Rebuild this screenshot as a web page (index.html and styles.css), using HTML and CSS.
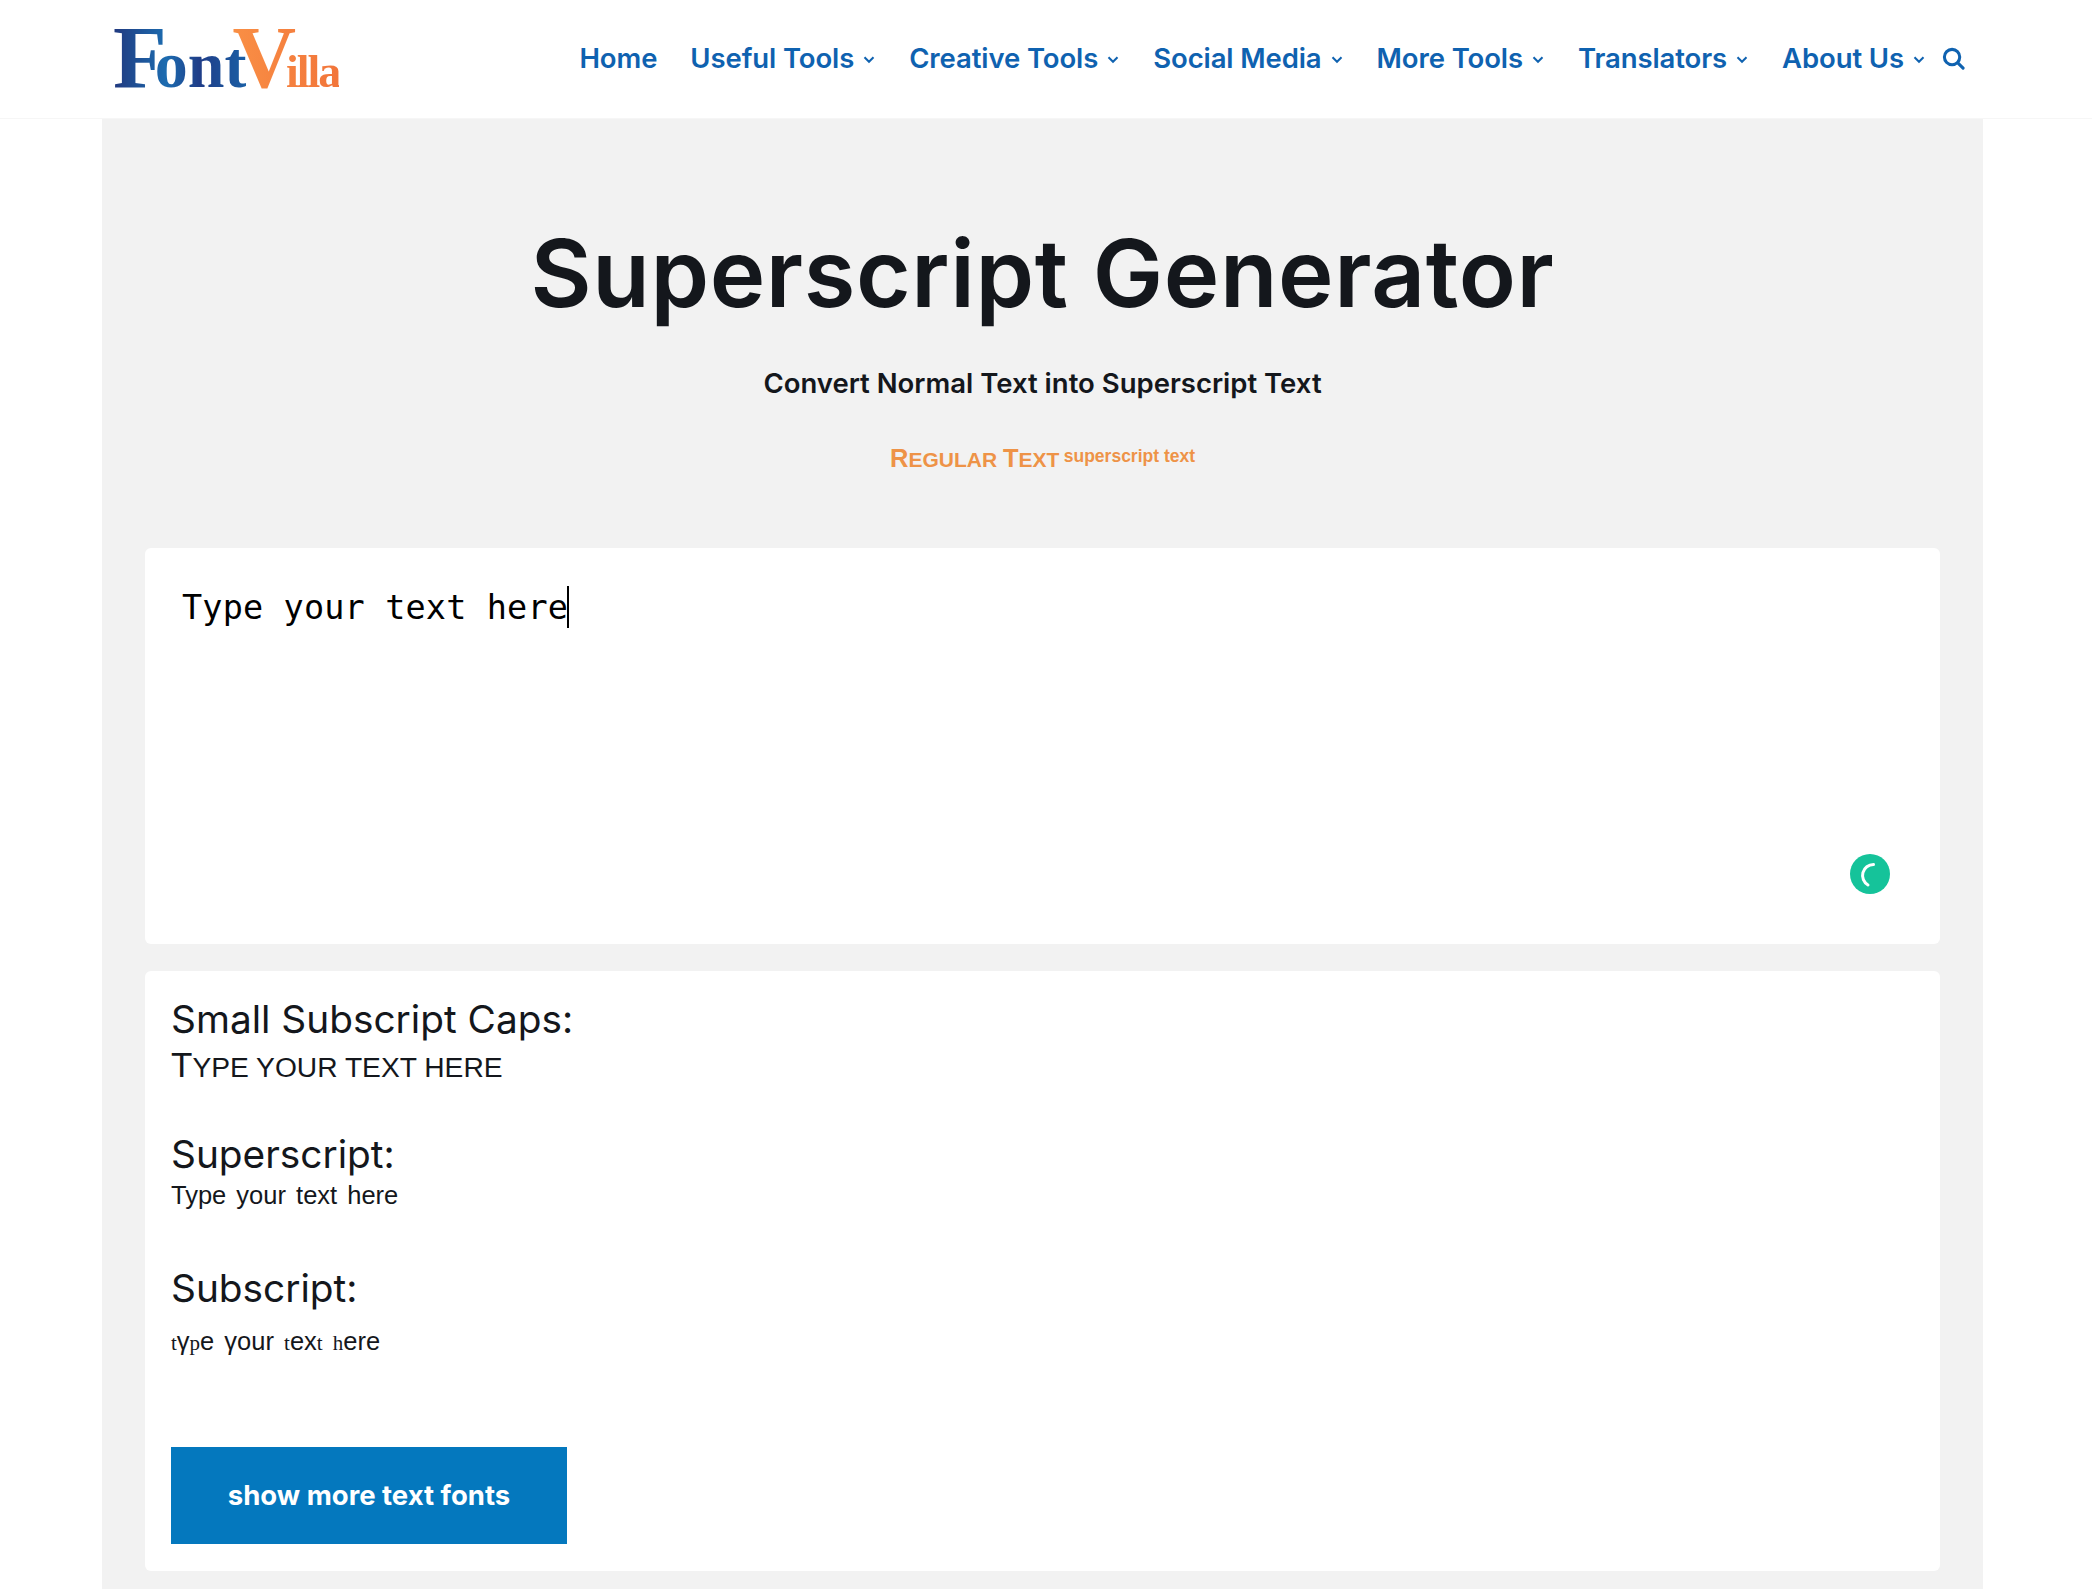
FILE: index.html
```html
<!DOCTYPE html>
<html lang="en">

<head>
    <meta charset="UTF-8">
    <title>Superscript Generator</title>
    <link rel="stylesheet" href="styles.css">
</head>

<body>
    <header class="topbar">
        <a class="logo" href="#">
            <span class="logo-font"><span class="logo-big logo-f">F</span>ont</span><span class="logo-villa"><span class="logo-big logo-v">V</span>illa</span>
        </a>
        <nav class="menu">
            <a href="#">Home</a>
            <a href="#">Useful Tools<svg class="chev" viewBox="0 0 12 8"><path d="M2 2l4 4 4-4" /></svg></a>
            <a href="#">Creative Tools<svg class="chev" viewBox="0 0 12 8"><path d="M2 2l4 4 4-4" /></svg></a>
            <a href="#">Social Media<svg class="chev" viewBox="0 0 12 8"><path d="M2 2l4 4 4-4" /></svg></a>
            <a href="#">More Tools<svg class="chev" viewBox="0 0 12 8"><path d="M2 2l4 4 4-4" /></svg></a>
            <a href="#">Translators<svg class="chev" viewBox="0 0 12 8"><path d="M2 2l4 4 4-4" /></svg></a>
            <a class="last" href="#">About Us<svg class="chev" viewBox="0 0 12 8"><path d="M2 2l4 4 4-4" /></svg></a>
            <svg class="search" viewBox="0 0 24 24"><circle cx="10.5" cy="10.5" r="8" /><path d="M16.5 16.5l5.5 5.5" /></svg>
        </nav>
    </header>

    <main class="panel">
        <h1>Superscript Generator</h1>
        <p class="intro">Convert Normal Text into Superscript Text</p>
        <p class="sample"><span class="sample-caps"><span class="cap">R</span>EGULAR <span class="cap">T</span>EXT</span> <span class="sample-sup">superscript text</span></p>

        <section class="editor">
            <div class="typed">Type your text here<span class="caret"></span></div>
            <svg class="badge" viewBox="0 0 40 40">
                <circle class="badge-bg" cx="20" cy="20" r="20" />
                <path class="badge-arc" d="M23.5 10.5A11 11 0 0 0 18 31" />
            </svg>
        </section>

        <section class="results">
            <h3>Small Subscript Caps:</h3>
            <p class="out-caps">Type your text here</p>
            <h3 class="gap-a">Superscript:</h3>
            <p class="out-sup">Type your text here</p>
            <h3 class="gap-b">Subscript:</h3>
            <p class="out-sub"><span class="ser">t</span>γ<span class="ser">p</span>e γour <span class="ser">t</span>ex<span class="ser">t</span> <span class="ser">h</span>ere</p>
            <button class="more">show more text fonts</button>
        </section>
    </main>
</body>

</html>
```

FILE: styles.css
```css
* {
    box-sizing: border-box;
}

body {
    margin: 0;
    background-color: white;
    color: #14171c;
    font-family: Inter, "Open Sans", sans-serif;
}

a {
    text-decoration: none;
    color: inherit;
}

.topbar {
    display: flex;
    align-items: center;
    justify-content: space-between;
    height: 119px;
    padding: 0 127px 0 113px;
    border-bottom: 1px solid #f6f6f6;
}

.logo {
    display: flex;
    align-items: baseline;
    font-family: "Liberation Serif", serif;
    font-weight: bold;
    font-size: 66px;
    line-height: 1;
    margin-top: -2px;
}

.logo-font {
    background: linear-gradient(90deg, #21397f, #1c6cb0 40%, #1f3d88 65%, #1a5fa5);
    -webkit-background-clip: text;
    background-clip: text;
    color: transparent;
}

.logo-villa {
    background: linear-gradient(90deg, #f98f45, #f2753a);
    -webkit-background-clip: text;
    background-clip: text;
    color: transparent;
    font-size: 46px;
    letter-spacing: -2px;
    margin-left: -14px;
}

.logo-big {
    font-size: 88px;
}

.logo-f {
    margin-right: -12px;
}

.logo-v {
    margin-right: -8px;
}

.menu {
    display: flex;
    align-items: center;
    margin-top: -2px;
    color: #0f62b0;
    font-size: 27.5px;
    font-weight: 600;
    letter-spacing: -0.1px;
}

.menu a {
    display: flex;
    align-items: center;
    margin-right: 33px;
}

.menu a.last {
    margin-right: 16px;
}

.chev {
    width: 14px;
    height: 9px;
    margin-left: 8px;
    margin-top: 3px;
    fill: none;
    stroke: #0f62b0;
    stroke-width: 1.8;
}

.search {
    width: 23px;
    height: 23px;
    fill: none;
    stroke: #0f62b0;
    stroke-width: 3.2;
    stroke-linecap: round;
}

.panel {
    width: 1881px;
    margin-left: 102px;
    padding: 0 43px 20px;
    background-color: #f2f2f2;
}

h1 {
    margin: 0;
    padding-top: 102px;
    text-align: center;
    font-size: 94px;
    line-height: 104px;
    font-weight: 600;
    letter-spacing: 0.6px;
}

.intro {
    margin: 38px 0 0;
    text-align: center;
    font-size: 27.5px;
    line-height: 40px;
    font-weight: 600;
}

.sample {
    margin: 41px 0 0;
    height: 34px;
    text-align: center;
    color: #ee9347;
    font-family: "Liberation Sans", sans-serif;
    font-weight: bold;
}

.sample-caps {
    font-size: 21px;
}

.cap {
    font-size: 25.5px;
}

.sample-sup {
    font-size: 17.5px;
    vertical-align: 5px;
}

.editor {
    position: relative;
    height: 396px;
    margin-top: 70px;
    padding: 38px 37px;
    background-color: white;
    border-radius: 6px;
}

.typed {
    display: flex;
    align-items: center;
    height: 42px;
    color: black;
    font-family: "DejaVu Sans Mono", monospace;
    font-size: 33.5px;
    letter-spacing: 0.15px;
    white-space: pre;
}

.caret {
    width: 1.5px;
    height: 42px;
    margin-left: -1px;
    background-color: black;
}

.badge {
    position: absolute;
    right: 50px;
    bottom: 50px;
    width: 40px;
    height: 40px;
}

.badge-bg {
    fill: #15c39a;
}

.badge-arc {
    fill: none;
    stroke: white;
    stroke-width: 3;
    stroke-linecap: round;
}

.results {
    margin-top: 27px;
    padding: 25px 26px 27px;
    background-color: white;
    border-radius: 6px;
}

h3 {
    margin: 0;
    font-size: 38.8px;
    line-height: 46px;
    font-weight: 400;
}

.out-caps {
    margin: 1px 0 0;
    font-family: "Liberation Sans", sans-serif;
    text-transform: uppercase;
    font-size: 28.2px;
    line-height: 44px;
}

.out-caps::first-letter {
    font-size: 35px;
}

.gap-a {
    margin-top: 41.5px;
}

.out-sup {
    margin: 0.5px 0 0;
    font-family: "Liberation Sans", sans-serif;
    font-size: 25.5px;
    line-height: 36px;
    word-spacing: 3px;
}

.gap-b {
    margin-top: 51.5px;
}

.out-sub {
    margin: 12px 0 0;
    font-family: "Liberation Sans", sans-serif;
    font-size: 25.5px;
    line-height: 36px;
    word-spacing: 3px;
}

.ser {
    font-family: "Liberation Serif", serif;
    font-size: 21px;
}

.more {
    display: block;
    width: 396px;
    height: 97px;
    margin-top: 86px;
    border: 0;
    background-color: #0478be;
    color: white;
    font-family: Inter, sans-serif;
    font-size: 27.5px;
    font-weight: 700;
}
```
